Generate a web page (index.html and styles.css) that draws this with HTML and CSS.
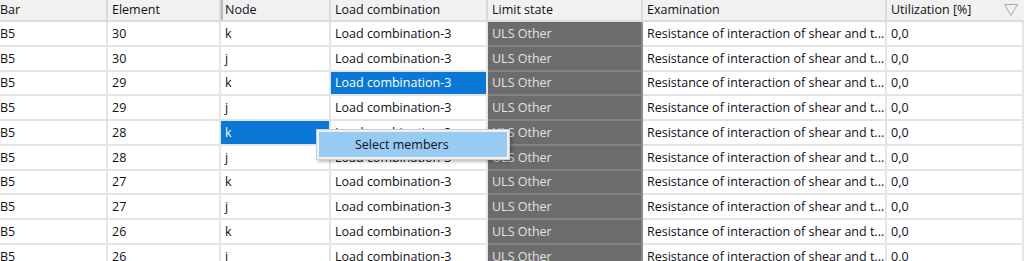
FILE: index.html
```html
<!DOCTYPE html>
<html>
<head>
<meta charset="utf-8">
<link rel="stylesheet" href="styles.css">
</head>
<body>
<div class="table">
  <div class="hcell first">Bar</div>
  <div class="hcell">Element</div>
  <div class="hcell node-h">Node</div>
  <div class="hcell">Load combination</div>
  <div class="hcell">Limit state</div>
  <div class="hcell">Examination</div>
  <div class="hcell last-h">Utilization [%]
    <svg class="filter" width="16" height="14" viewBox="0 0 16 14"><polygon points="1.5,1.5 14.5,1.5 8,12.5" fill="none" stroke="#a8a8a8" stroke-width="1"/></svg>
  </div>

  <div class="cell first">B5</div><div class="cell">30</div><div class="cell">k</div><div class="cell">Load combination-3</div><div class="cell dark">ULS Other</div><div class="cell">Resistance of interaction of shear and t...</div><div class="cell">0,0</div>
  <div class="cell first">B5</div><div class="cell">30</div><div class="cell">j</div><div class="cell">Load combination-3</div><div class="cell dark">ULS Other</div><div class="cell">Resistance of interaction of shear and t...</div><div class="cell">0,0</div>
  <div class="cell first">B5</div><div class="cell">29</div><div class="cell">k</div><div class="cell sel">Load combination-3</div><div class="cell dark">ULS Other</div><div class="cell">Resistance of interaction of shear and t...</div><div class="cell">0,0</div>
  <div class="cell first">B5</div><div class="cell">29</div><div class="cell">j</div><div class="cell">Load combination-3</div><div class="cell dark">ULS Other</div><div class="cell">Resistance of interaction of shear and t...</div><div class="cell">0,0</div>
  <div class="cell first">B5</div><div class="cell">28</div><div class="cell sel">k</div><div class="cell">Load combination-3</div><div class="cell dark">ULS Other</div><div class="cell">Resistance of interaction of shear and t...</div><div class="cell">0,0</div>
  <div class="cell first">B5</div><div class="cell">28</div><div class="cell">j</div><div class="cell">Load combination-3</div><div class="cell dark">ULS Other</div><div class="cell">Resistance of interaction of shear and t...</div><div class="cell">0,0</div>
  <div class="cell first">B5</div><div class="cell">27</div><div class="cell">k</div><div class="cell">Load combination-3</div><div class="cell dark">ULS Other</div><div class="cell">Resistance of interaction of shear and t...</div><div class="cell">0,0</div>
  <div class="cell first">B5</div><div class="cell">27</div><div class="cell">j</div><div class="cell">Load combination-3</div><div class="cell dark">ULS Other</div><div class="cell">Resistance of interaction of shear and t...</div><div class="cell">0,0</div>
  <div class="cell first">B5</div><div class="cell">26</div><div class="cell">k</div><div class="cell">Load combination-3</div><div class="cell dark">ULS Other</div><div class="cell">Resistance of interaction of shear and t...</div><div class="cell">0,0</div>
  <div class="cell first">B5</div><div class="cell">26</div><div class="cell">j</div><div class="cell">Load combination-3</div><div class="cell dark">ULS Other</div><div class="cell">Resistance of interaction of shear and t...</div><div class="cell">0,0</div>
</div>
<div class="menu"><div class="menu-item">Select members</div></div>
</body>
</html>
```
FILE: styles.css
```css
html, body {
  margin: 0;
  padding: 0;
  background: #ffffff;
  overflow: hidden;
}
body {
  width: 1024px;
  height: 261px;
  position: relative;
  font-family: "Open Sans", "Noto Sans", sans-serif;
  font-size: 12.5px;
  font-weight: 500;
  color: #101018;
}
.table {
  display: grid;
  grid-template-columns: 108px 113px 110px 157px 155px 244px 137px;
  grid-template-rows: 22px;
  grid-auto-rows: 24.75px;
}
.hcell, .cell {
  box-sizing: border-box;
  display: flex;
  align-items: center;
  padding-left: 4px;
  white-space: nowrap;
  overflow: hidden;
  border-right: 2px solid #e4e4e4;
  border-bottom: 2px solid #e4e4e4;
}
.hcell {
  background: #f1f1f1;
  border-right-color: #dadada;
  border-bottom-color: #dcdcdc;
  padding-bottom: 1px;
}
.node-h {
  box-shadow: inset 2px 0 0 #b8b8b8;
}
.last-h {
  position: relative;
  border-right: none;
}
.filter {
  position: absolute;
  right: 5px;
  top: 3px;
}
.first {
  padding-left: 0;
}
.cell.dark {
  background: #6c6c6c;
  color: #e2e2e2;
  border-right-color: #8a8a8a;
  border-bottom-color: #838383;
}
.cell.sel {
  background: #0a78d6;
  color: #ffffff;
}
.menu {
  position: absolute;
  left: 316px;
  top: 129px;
  width: 194px;
  height: 31px;
  box-sizing: border-box;
  background: #f0f0f0;
  border: 1px solid #cfcfcf;
  padding: 2px;
  box-shadow: 2px 2px 3px rgba(0, 0, 0, 0.25);
}
.menu-item {
  height: 100%;
  box-sizing: border-box;
  background: #98cbf4;
  display: flex;
  align-items: center;
  padding-left: 36px;
  color: #101018;
}
```
